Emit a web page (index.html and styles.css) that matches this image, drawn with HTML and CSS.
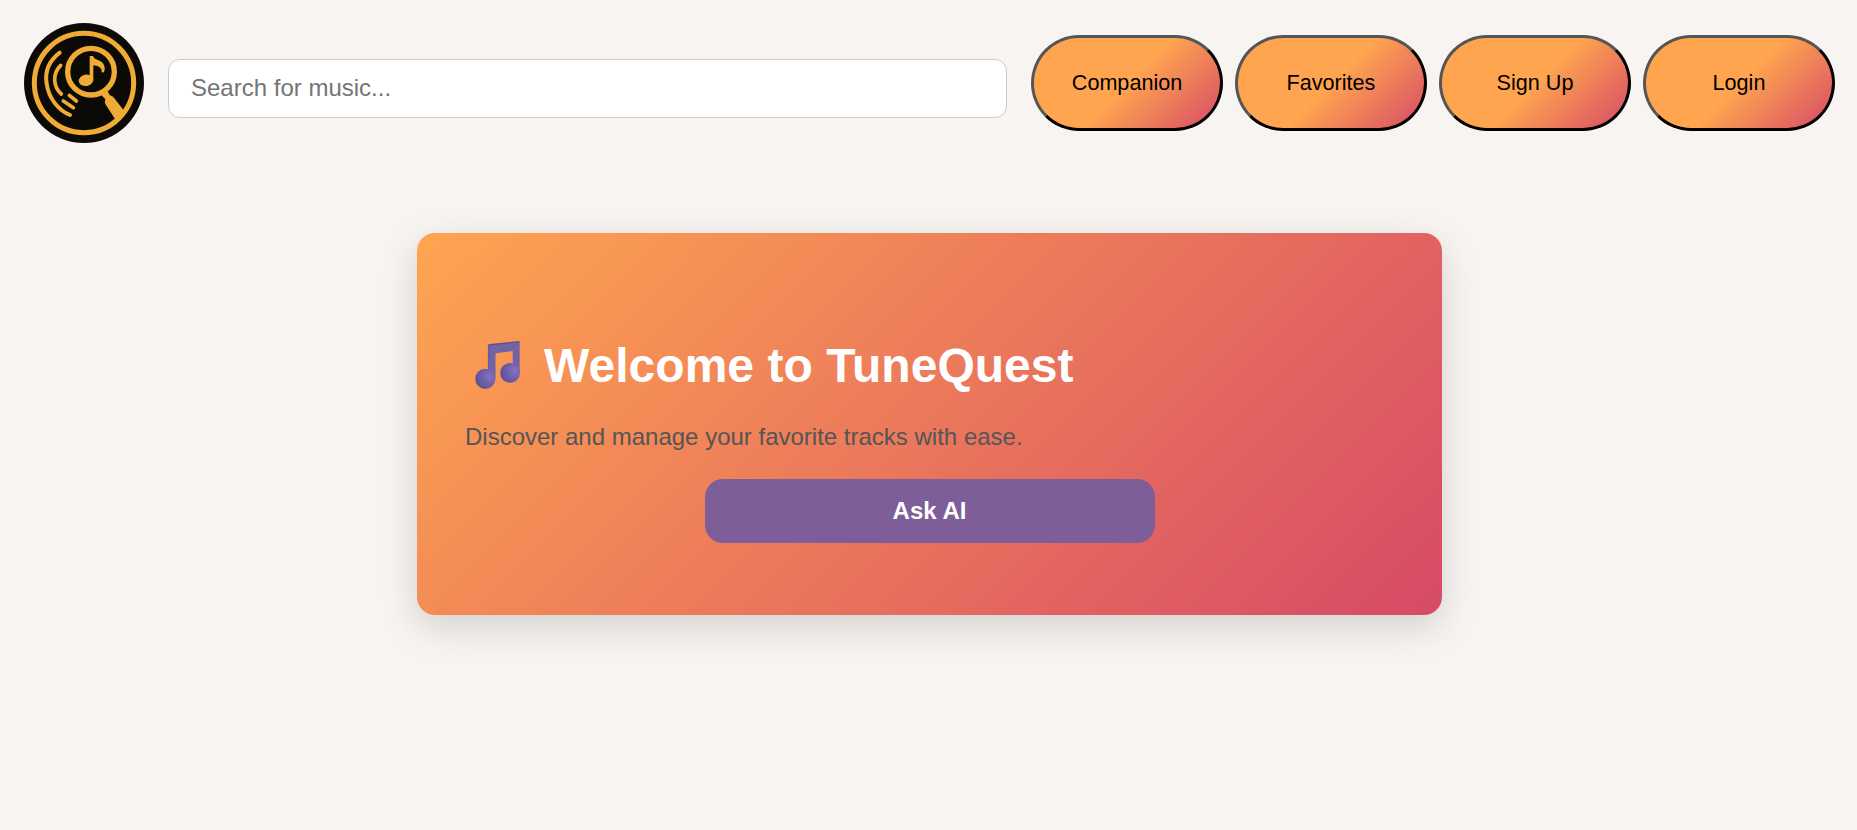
FILE: index.html
```html
<!DOCTYPE html>
<html lang="en">
<head>
<meta charset="utf-8">
<title>TuneQuest</title>
<link rel="stylesheet" href="styles.css">
</head>
<body>
<header class="topbar">
  <svg class="logo" viewBox="30 27 360 360" role="img" aria-label="TuneQuest">
    <circle cx="210" cy="207" r="180" fill="#0b0a06"/>
    <g fill="none" stroke="#f0ab37" stroke-linecap="round">
      <circle cx="210" cy="207" r="149" stroke-width="15"/>
      <circle cx="231" cy="173" r="70" stroke-width="16"/>
      <path d="M137 116C104 142 92 175 98 209C104 252 132 288 168 303" stroke-width="12"/>
      <path d="M140 154C113 181 119 220 142 240" stroke-width="11"/>
      <path d="M166 244L187 261M148 261L178 281" stroke-width="11"/>
    </g>
    <g fill="#f0ab37">
      <path d="M262 243L281 232L287 243Q298 246 302 254L331 291L305 318L274 270Q271 264 274 256Z"/>
      <ellipse cx="216" cy="199" rx="22" ry="17" transform="rotate(-12 216 199)"/>
      <path d="M227 126H237C241 138 254 136 264 145Q273 153 272 168Q271 176 265 176Q261 175 263 168Q259 156 238 154V200H227Z"/>
    </g>
  </svg>
  <input class="search" type="text" placeholder="Search for music...">
  <nav class="nav">
    <button class="nav-button">Companion</button>
    <button class="nav-button">Favorites</button>
    <button class="nav-button">Sign Up</button>
    <button class="nav-button">Login</button>
  </nav>
</header>
<main class="hero">
  <h1 class="hero-title">
    <svg class="note" viewBox="105 63 136 146" aria-hidden="true">
      <defs>
        <radialGradient id="head" cx=".72" cy=".4" r=".65">
          <stop offset="0" stop-color="#8472bf"/>
          <stop offset="1" stop-color="#61539a"/>
        </radialGradient>
      </defs>
      <path d="M144 76Q144 73 148 72L240 63V158H219V93L167 100V178H144Z" fill="#7262a6"/>
      <path d="M145 75L239 65" stroke="#5d4d86" stroke-width="3"/>
      <path d="M147 76V148" stroke="#65589b" stroke-width="3"/>
      <circle cx="136" cy="177" r="30.500" fill="url(#head)"/>
      <circle cx="211" cy="159" r="30" fill="url(#head)"/>
    </svg>
    <span class="hero-name">Welcome to TuneQuest</span>
  </h1>
  <p class="hero-text">Discover and manage your favorite tracks with ease.</p>
  <button class="ask">Ask AI</button>
</main>
</body>
</html>
```
FILE: styles.css
```css
* { box-sizing: border-box; }
body {
  margin: 0;
  min-height: 100vh;
  background: #f8f4f1;
  font-family: "Liberation Sans", Arial, sans-serif;
}
.topbar {
  display: flex;
  align-items: center;
  gap: 24px;
  height: 166px;
  padding: 0 22px 0 24px;
}
.logo { width: 120px; height: 120px; flex: none; }
.search {
  flex: 1;
  min-width: 0;
  height: 59px;
  margin-top: 11px;
  padding: 0 22px 2px;
  border: 1px solid #ccc;
  border-radius: 12px;
  background: #fff;
  font: 24px "Liberation Sans", Arial, sans-serif;
}
.search::placeholder { color: #757575; }
.nav { display: flex; gap: 12px; }
.nav-button {
  width: 192px;
  height: 96px;
  padding: 0;
  border: 3px solid;
  border-color: #555 #000 #000 #555;
  border-radius: 48px;
  background: linear-gradient(135deg, #ffa550 50%, #d64a67 100%);
  color: #000;
  font: 21.6px "Liberation Sans", Arial, sans-serif;
}
.hero {
  display: flex;
  flex-direction: column;
  width: 1025px;
  height: 382px;
  margin: 67px 0 0 417px;
  padding: 104px 48px 0;
  border-radius: 18px;
  background: linear-gradient(135deg, #ffa550, #d64a67);
  box-shadow: 0 12px 36px rgba(0, 0, 0, .15);
}
.hero-title {
  display: flex;
  align-items: center;
  gap: 24px;
  height: 56px;
  margin: 0;
  padding-left: 10px;
  color: #fff;
  font-size: 48px;
  line-height: 56px;
}
.hero-name { padding-top: 1px; letter-spacing: .03px; }
.note { width: 45px; height: 48.500px; flex: none; }
.hero-text {
  margin: 30px 0 0;
  color: #555;
  font-size: 24px;
  line-height: 28px;
}
.ask {
  width: 450px;
  height: 64px;
  margin: 28px auto 0;
  border: 0;
  border-radius: 18px;
  background: #7d5e99;
  color: #fff;
  font: bold 24px "Liberation Sans", Arial, sans-serif;
}
```
